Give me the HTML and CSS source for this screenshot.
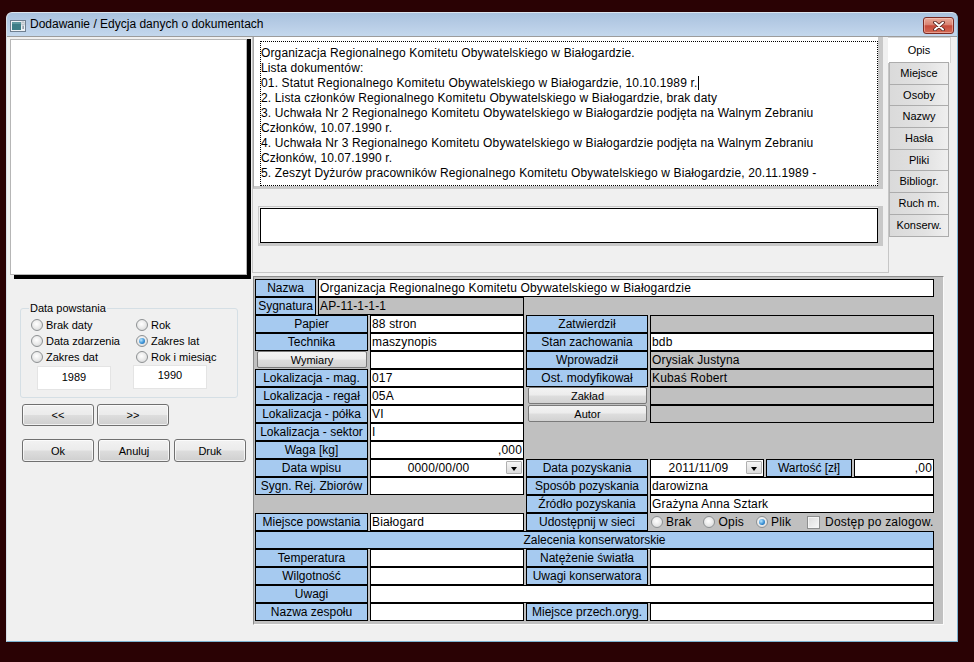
FILE: index.html
```html
<!DOCTYPE html>
<html lang="pl">
<head>
<meta charset="utf-8">
<title>Dodawanie / Edycja danych o dokumentach</title>
<link rel="stylesheet" href="styles.css">
</head>
<body>
<div class="window">
  <div class="titlebar">
    <svg class="appicon" width="16" height="14" viewBox="0 0 16 14">
      <rect x="0.5" y="1.5" width="15" height="11" fill="#eef2f6" stroke="#6f7f90"/>
      <rect x="2" y="3" width="9" height="8" fill="#3d7d86"/>
      <rect x="2" y="3" width="9" height="2" fill="#5f98a0"/>
      <rect x="12" y="3" width="2" height="3" fill="#ffffff" stroke="#7d8a96" stroke-width="0.6"/>
      <rect x="12.6" y="7" width="1" height="3" fill="#5a6a78"/>
    </svg>
    <span class="title">Dodawanie / Edycja danych o dokumentach</span>
    <div class="close">
      <svg width="12" height="10" viewBox="0 0 12 10">
        <path d="M2 1.5 L10 8.5 M10 1.5 L2 8.5" stroke="#4a1a16" stroke-width="3.6" stroke-linecap="round"/>
        <path d="M2 1.5 L10 8.5 M10 1.5 L2 8.5" stroke="#ffffff" stroke-width="2" stroke-linecap="round"/>
      </svg>
    </div>
  </div>
  <div class="client">
    <div class="leftcol">
      <div class="photo"></div>
      <fieldset class="group">
        <legend>Data powstania</legend>
        <div class="radios">
          <span class="rb"><span class="radio"></span>Brak daty</span>
          <span class="rb"><span class="radio"></span>Rok</span>
          <span class="rb"><span class="radio"></span>Data zdarzenia</span>
          <span class="rb"><span class="radio on"></span>Zakres lat</span>
          <span class="rb"><span class="radio"></span>Zakres dat</span>
          <span class="rb"><span class="radio"></span>Rok i miesiąc</span>
        </div>
        <div class="years">
          <div class="yearbox">1989</div>
          <div class="yearbox y2">1990</div>
        </div>
      </fieldset>
      <div class="btnrow nav">
        <button class="wbtn">&lt;&lt;</button>
        <button class="wbtn">&gt;&gt;</button>
      </div>
      <div class="btnrow act">
        <button class="wbtn">Ok</button>
        <button class="wbtn">Anuluj</button>
        <button class="wbtn">Druk</button>
      </div>
    </div>
    <div class="rightcol">
      <div class="top">
        <div class="descpanel">
          <div class="memo">
            <div class="focus">
              <div>Organizacja Regionalnego Komitetu Obywatelskiego w Białogardzie.</div>
              <div>Lista dokumentów:</div>
              <div>01. Statut Regionalnego Komitetu Obywatelskiego w Białogardzie, 10.10.1989 r.<span class="caret"></span></div>
              <div>2. Lista członków Regionalnego Komitetu Obywatelskiego w Białogardzie, brak daty</div>
              <div>3. Uchwała Nr 2 Regionalnego Komitetu Obywatelskiego w Białogardzie podjęta na Walnym Zebraniu</div>
              <div>Członków, 10.07.1990 r.</div>
              <div>4. Uchwała Nr 3 Regionalnego Komitetu Obywatelskiego w Białogardzie podjęta na Walnym Zebraniu</div>
              <div>Członków, 10.07.1990 r.</div>
              <div>5. Zeszyt Dyżurów pracowników Regionalnego Komitetu Obywatelskiego w Białogardzie, 20.11.1989 -</div>
            </div>
          </div>
          <div class="edit2"><div class="edit2-in"></div></div>
        </div>
        <div class="tabs">
          <div class="tab active">Opis</div>
          <div class="tab">Miejsce</div>
          <div class="tab">Osoby</div>
          <div class="tab">Nazwy</div>
          <div class="tab">Hasła</div>
          <div class="tab">Pliki</div>
          <div class="tab">Bibliogr.</div>
          <div class="tab">Ruch m.</div>
          <div class="tab">Konserw.</div>
        </div>
      </div>
      <div class="formpanel">
        <div class="grid">
          <div class="lbl">Nazwa</div><div class="val sp6">Organizacja Regionalnego Komitetu Obywatelskiego w Białogardzie</div>
          <div class="lbl">Sygnatura</div><div class="val ro sp2">AP-11-1-1-1</div><div class="sp4"></div>
          <div class="lbl sp2">Papier</div><div class="val">88 stron</div><div class="lbl">Zatwierdził</div><div class="val ro sp3"></div>
          <div class="lbl sp2">Technika</div><div class="val">maszynopis</div><div class="lbl">Stan zachowania</div><div class="val sp3">bdb</div>
          <button class="gbtn sp2">Wymiary</button><div class="val"></div><div class="lbl">Wprowadził</div><div class="val ro sp3">Orysiak Justyna</div>
          <div class="lbl sp2">Lokalizacja - mag.</div><div class="val">017</div><div class="lbl">Ost. modyfikował</div><div class="val ro sp3">Kubaś Robert</div>
          <div class="lbl sp2">Lokalizacja - regał</div><div class="val">05A</div><button class="gbtn">Zakład</button><div class="val ro sp3"></div>
          <div class="lbl sp2">Lokalizacja - półka</div><div class="val">VI</div><button class="gbtn">Autor</button><div class="val ro sp3"></div>
          <div class="lbl sp2">Lokalizacja - sektor</div><div class="val">I</div><div class="sp4"></div>
          <div class="lbl sp2">Waga [kg]</div><div class="val num">,000</div><div class="sp4"></div>
          <div class="lbl sp2">Data wpisu</div><div class="val combo"><span class="ctext">0000/00/00</span><span class="dd"></span></div><div class="lbl">Data pozyskania</div><div class="val combo"><span class="ctext">2011/11/09</span><span class="dd"></span></div><div class="lbl">Wartość [zł]</div><div class="val num">,00</div>
          <div class="lbl sp2">Sygn. Rej. Zbiorów</div><div class="val"></div><div class="lbl">Sposób pozyskania</div><div class="val sp3">darowizna</div>
          <div class="sp3"></div><div class="lbl">Źródło pozyskania</div><div class="val sp3">Grażyna Anna Sztark</div>
          <div class="lbl sp2">Miejsce powstania</div><div class="val">Białogard</div><div class="lbl">Udostępnij w sieci</div>
          <div class="opts sp3">
            <span class="opt"><span class="radio"></span>Brak</span>
            <span class="opt"><span class="radio"></span>Opis</span>
            <span class="opt"><span class="radio on"></span>Plik</span>
            <span class="opt chk"><span class="check"></span>Dostęp po zalogow.</span>
          </div>
          <div class="lbl sp7">Zalecenia konserwatorskie</div>
          <div class="lbl sp2">Temperatura</div><div class="val"></div><div class="lbl">Natężenie światła</div><div class="val sp3"></div>
          <div class="lbl sp2">Wilgotność</div><div class="val"></div><div class="lbl">Uwagi konserwatora</div><div class="val sp3"></div>
          <div class="lbl sp2">Uwagi</div><div class="val sp5"></div>
          <div class="lbl sp2">Nazwa zespołu</div><div class="val"></div><div class="lbl">Miejsce przech.oryg.</div><div class="val sp3"></div>
        </div>
      </div>
    </div>
  </div>
</div>
</body>
</html>
```

FILE: styles.css
```css
* { box-sizing: border-box; }
html, body { margin: 0; padding: 0; }
body {
  background: #2a0204;
  width: 974px;
  height: 662px;
  overflow: hidden;
  font-family: "Liberation Sans", Arial, sans-serif;
  font-size: 12px;
  color: #000;
}

.window {
  margin: 12px 0 0 6px;
  width: 952px;
  height: 630px;
  border: 1px solid;
  border-color: #dbe4ee #7db4d1 #7db4d1 #d6dde5;
  border-radius: 6px 6px 0 0;
  background: #f0f0f0;
  display: flex;
  flex-direction: column;
}

/* ---------- title bar ---------- */
.titlebar {
  height: 24px;
  flex: none;
  display: flex;
  align-items: flex-start;
  padding-left: 3px;
  border-bottom: 1px solid #9c9c9c;
  border-radius: 5px 5px 0 0;
  background: linear-gradient(#a9c2de, #b8cde6 55%, #c4d8ed);
}
.appicon { margin-top: 6px; flex: none; }
.title {
  margin: 3px 0 0 4px;
  font-size: 12px;
  line-height: 16px;
  color: #000;
}
.close {
  margin: 4px 3px 0 auto;
  width: 31px;
  height: 17px;
  border: 1px solid #7a2a22;
  border-radius: 3px;
  background: linear-gradient(#e9ab9b 0%, #d98271 45%, #c54a3b 52%, #d36a54 100%);
  display: flex;
  align-items: center;
  justify-content: center;
  box-shadow: inset 0 0 0 1px rgba(255, 220, 210, 0.45);
}

/* ---------- client ---------- */
.client {
  flex: 1;
  display: flex;
}
.leftcol {
  width: 245px;
  flex: none;
  display: flex;
  flex-direction: column;
}
.photo {
  margin: 2px 0 0 3px;
  width: 237px;
  height: 236px;
  background: #fff;
  border: 1px solid #b6b6b6;
  box-shadow: 4px 0 0 #000, 4px 4px 0 #000;
}

.group {
  margin: 27px 0 0 13px;
  width: 218px;
  padding: 0 0 7px 10px;
  border: 1px solid #d5dfe5;
  border-radius: 3px;
  min-inline-size: 0;
  font-size: 11px;
}
.group legend {
  margin-left: -2px;
  padding: 0 1px;
  font-size: 11px;
  line-height: 13px;
}
.radios {
  display: grid;
  grid-template-columns: 105px 1fr;
  grid-auto-rows: 16px;
  margin-top: 2px;
}
.rb {
  display: flex;
  align-items: center;
  font-size: 11px;
}
.radio {
  width: 12px;
  height: 12px;
  border-radius: 50%;
  border: 1px solid #8e9193;
  background: radial-gradient(circle at 45% 40%, #ffffff 0%, #ececec 45%, #cfd1d2 100%);
  margin-right: 3px;
  flex: none;
  position: relative;
}
.radio.on::after {
  content: "";
  position: absolute;
  left: 2px;
  top: 2px;
  width: 6px;
  height: 6px;
  border-radius: 50%;
  background: radial-gradient(circle at 35% 35%, #b9e6ff 0%, #3b92d6 55%, #155a9c 100%);
}
.years {
  display: flex;
  gap: 22px;
  margin: 1px 0 0 6px;
}
.yearbox {
  width: 74px;
  height: 24px;
  background: #fff;
  border: 1px solid #e4e4e4;
  text-align: center;
  font-size: 11px;
  line-height: 21px;
}
.yearbox.y2 { line-height: 19px; margin-top: -1px; }

.btnrow {
  display: flex;
  gap: 3px;
  margin-left: 15px;
}
.btnrow.nav { margin-top: 6px; }
.btnrow.act { margin-top: 13px; gap: 4px; }
.wbtn {
  width: 72px;
  height: 22px;
  padding: 0;
  border: 1px solid #707070;
  border-radius: 3px;
  background: linear-gradient(#f2f2f2 0%, #ebebeb 48%, #dddddd 52%, #cfcfcf 100%);
  box-shadow: inset 0 0 0 1px rgba(255, 255, 255, 0.7);
  font-family: "Liberation Sans", Arial, sans-serif;
  font-size: 11px;
  color: #000;
}
.btnrow.act .wbtn { height: 23px; }

/* ---------- right column ---------- */
.rightcol {
  flex: 1;
  display: flex;
  flex-direction: column;
}
.top {
  display: flex;
  height: 236px;
}
.descpanel {
  width: 637px;
  border: 1px solid #c6c6c6;
  border-top: none;
}
.memo {
  width: 630px;
  height: 152px;
  background: #fff;
  border-left: 1px solid #a8a8a8;
  border-right: 5px solid #c8c8c8;
  border-bottom: 3px solid #c8c8c8;
  padding: 4px 0 0 6px;
}
.focus {
  width: 618px;
  height: 145px;
  border: 1px dotted #000;
  padding-top: 4px;
  font-size: 12px;
  line-height: 15px;
  letter-spacing: 0.14px;
  white-space: nowrap;
  overflow: hidden;
}
.caret {
  display: inline-block;
  width: 1px;
  height: 14px;
  background: #000;
  vertical-align: -3px;
  margin-left: 1px;
}
.edit2 {
  margin: 17px 0 0 5px;
  width: 625px;
  height: 40px;
  border-top: 1px solid #c8c8c8;
  border-left: 1px solid #c8c8c8;
  border-right: 5px solid #c8c8c8;
  border-bottom: 3px solid #c8c8c8;
  padding: 1px 0 0 1px;
}
.edit2-in {
  height: 35px;
  background: #fff;
  border: 1px solid #000;
}

.tabs {
  width: 63px;
  display: flex;
  flex-direction: column;
}
.tab {
  width: 60px;
  height: 22.7px;
  border: 1px solid #acacac;
  border-left: 1px solid #b4b4b4;
  margin-top: -1px;
  background: linear-gradient(to right, #dadada 0%, #e2e2e2 60%, #efefef 100%);
  text-align: center;
  font-size: 11px;
  line-height: 20px;
  flex: none;
}
.tab.active {
  width: 63px;
  height: 26px;
  margin-top: 0;
  margin-left: -1px;
  background: #fff;
  border: 1px solid #d4d4d4;
  border-left: none;
  border-bottom: none;
  line-height: 24px;
}

/* ---------- form panel ---------- */
.formpanel {
  margin: 3px 0 0 1px;
  width: 691px;
  height: 349px;
  background: #c0c0c0;
  border: 1px solid;
  border-color: #8c8c8c #fafafa #fafafa #8c8c8c;
  padding: 2px 0 0 1px;
}
.grid {
  display: grid;
  grid-template-columns: 61px 50px 154px 122px 114px 86px 80px;
  grid-auto-rows: 18px;
  column-gap: 2px;
}
.sp2 { grid-column: span 2; }
.sp3 { grid-column: span 3; }
.sp4 { grid-column: span 4; }
.sp5 { grid-column: span 5; }
.sp6 { grid-column: span 6; }
.sp7 { grid-column: span 7; }

.lbl {
  background: #a6caf0;
  border: 1px solid #000;
  text-align: center;
  line-height: 16px;
  white-space: nowrap;
  overflow: hidden;
}
.val {
  background: #fff;
  border: 1px solid #000;
  padding-left: 1px;
  line-height: 16px;
  letter-spacing: 0.15px;
  white-space: nowrap;
  overflow: hidden;
}
.val.ro { background: #c0c0c0; }
.val.num { text-align: right; padding-right: 1px; }
.combo { display: flex; padding: 0; }
.ctext { flex: 1; text-align: center; }
.dd {
  width: 16px;
  height: 13px;
  margin: 1px 1px 0 0;
  border: 1px solid #b0b0b0;
  border-radius: 1px;
  background: linear-gradient(#f6f6f6, #dcdcdc);
  position: relative;
}
.dd::after {
  content: "";
  position: absolute;
  left: 4px;
  top: 5px;
  border-left: 3.5px solid transparent;
  border-right: 3.5px solid transparent;
  border-top: 4px solid #000;
}
.gbtn {
  margin: 0 1px 1px 2px;
  padding: 0;
  border: 1px solid #7a7a7a;
  border-radius: 2px;
  background: linear-gradient(#f3f3f3 0%, #ececec 48%, #dedede 52%, #d2d2d2 100%);
  font-family: "Liberation Sans", Arial, sans-serif;
  font-size: 11px;
  line-height: 14px;
  color: #000;
}
.opts {
  display: flex;
  align-items: center;
  padding-left: 1px;
  white-space: nowrap;
  letter-spacing: 0.2px;
}
.opt {
  display: flex;
  align-items: center;
  margin-right: 12px;
}
.opt .radio { margin-right: 3px; }
.opt.chk { margin-left: 4px; margin-right: 0; }
.check {
  width: 13px;
  height: 13px;
  border: 1px solid #8e8f8f;
  background: linear-gradient(135deg, #dcdcdc, #f8f8f8);
  box-shadow: inset 0 0 0 1px #f4f4f4;
  margin-right: 5px;
  flex: none;
}
```
